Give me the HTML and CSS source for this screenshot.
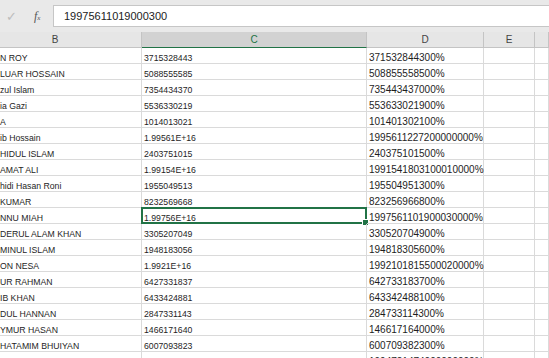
FILE: index.html
```html
<!DOCTYPE html>
<html lang="en">
<head>
    <meta charset="UTF-8">
    <meta name="viewport" content="width=device-width, initial-scale=1.0">
    <title>Sheet</title>
    <link rel="stylesheet" href="styles.css">
</head>
<body>

<div class="toolbar">
    <div class="tools">
        <span class="check">&#10003;</span>
        <span class="fx"><i>f</i><small>x</small></span>
    </div>
    <div class="formula">19975611019000300</div>
</div>

<div class="sheet">
    <div class="row head">
        <div class="cell b">B</div>
        <div class="cell c active">C</div>
        <div class="cell d">D</div>
        <div class="cell e">E</div>
        <div class="cell f"></div>
    </div>
    <div id="rows"></div>
</div>

<script>
    const data = [
        ['N ROY', '3715328443', '371532844300%'],
        ['LUAR HOSSAIN', '5088555585', '508855558500%'],
        ['zul Islam', '7354434370', '735443437000%'],
        ['ia Gazi', '5536330219', '553633021900%'],
        ['A', '1014013021', '101401302100%'],
        ['ib Hossain', '1.99561E+16', '1995611227200000000%'],
        ['HIDUL ISLAM', '2403751015', '240375101500%'],
        ['AMAT ALI', '1.99154E+16', '1991541803100010000%'],
        ['hidi Hasan Roni', '1955049513', '195504951300%'],
        ['KUMAR', '8232569668', '823256966800%'],
        ['NNU MIAH', '1.99756E+16', '1997561101900030000%'],
        ['DERUL ALAM KHAN', '3305207049', '330520704900%'],
        ['MINUL ISLAM', '1948183056', '194818305600%'],
        ['ON NESA', '1.9921E+16', '1992101815500020000%'],
        ['UR RAHMAN', '6427331837', '642733183700%'],
        ['IB KHAN', '6433424881', '643342488100%'],
        ['DUL HANNAN', '2847331143', '284733114300%'],
        ['YMUR HASAN', '1466171640', '146617164000%'],
        ['HATAMIM BHUIYAN', '6007093823', '600709382300%'],
        ['TAMAN SIDDIQUI MANNA', '1.99473E+16', '1994721474000000000%']
    ];
    const selectedRow = 10;
    const rows = document.getElementById('rows');

    data.forEach((item, i) => {
        const row = document.createElement('div');
        row.className = 'row';
        const cls = ['b', 'c', 'd', 'e', 'f'];
        cls.forEach((c, j) => {
            const cell = document.createElement('div');
            cell.className = 'cell ' + c;
            if (j < 3) cell.textContent = item[j];
            if (j === 1 && i === selectedRow) {
                const sel = document.createElement('span');
                sel.className = 'selection';
                const handle = document.createElement('span');
                handle.className = 'handle';
                sel.appendChild(handle);
                cell.appendChild(sel);
            }
            row.appendChild(cell);
        });
        rows.appendChild(row);
    });
</script>

</body>
</html>
```

FILE: styles.css
```css
body {
    margin: 0;
    width: 549px;
    height: 358px;
    overflow: hidden;
    background: #fff;
    font-family: "Liberation Sans", Arial, sans-serif;
    color: #1e1e1e;
}
.toolbar {
    display: flex;
    height: 32px;
    padding-top: 5px;
    box-sizing: border-box;
    background: #e9e9e9;
}
.tools {
    width: 53px;
    height: 22px;
    display: flex;
    align-items: center;
}
.check {
    color: #bcbcbc;
    font-size: 13px;
    margin-left: 6px;
}
.fx {
    margin-left: 17px;
    color: #555;
    font-family: "Liberation Serif", serif;
    font-size: 12px;
}
.fx small {
    font-size: 7px;
    font-style: italic;
}
.formula {
    flex: 1;
    height: 22px;
    box-sizing: border-box;
    background: #fff;
    border: 1px solid #c6c6c6;
    border-right: none;
    padding-left: 10px;
    font-size: 11px;
    line-height: 20px;
    color: #222;
}
.sheet {
    margin-left: -31px;
    width: 580px;
}
.row {
    display: grid;
    grid-template-columns: 173px 225px 117px 51px 1fr;
    height: 16px;
}
.cell {
    position: relative;
    box-sizing: border-box;
    border-right: 1px solid #dadada;
    border-bottom: 1px solid #dadada;
    display: flex;
    align-items: flex-end;
    white-space: nowrap;
    font-size: 8.7px;
    line-height: 9px;
    padding-left: 2px;
}
.cell.b {
    padding-left: 31px;
    overflow: hidden;
}
.cell.d {
    font-size: 10px;
    line-height: 10px;
    overflow: visible;
    z-index: 1;
}
.head {
    height: 16px;
}
.head .cell {
    background: #e6e6e6;
    border-right: 1px solid #c4c4c4;
    border-bottom: 1px solid #c4c4c4;
    justify-content: center;
    align-items: center;
    font-size: 10px;
    line-height: 15px;
    color: #444;
    padding-left: 0;
}
.head .cell.b {
    padding-left: 0;
}
.head .cell.active {
    background: #d2d2d2;
    color: #217346;
    border-bottom: 1px solid #217346;
}
.selection {
    position: absolute;
    top: -1px;
    left: -1px;
    right: -1px;
    bottom: -1px;
    border: 2px solid #217346;
    box-sizing: border-box;
}
.handle {
    position: absolute;
    right: -4px;
    bottom: -4px;
    width: 5px;
    height: 5px;
    background: #217346;
    border: 1px solid #fff;
}
```
